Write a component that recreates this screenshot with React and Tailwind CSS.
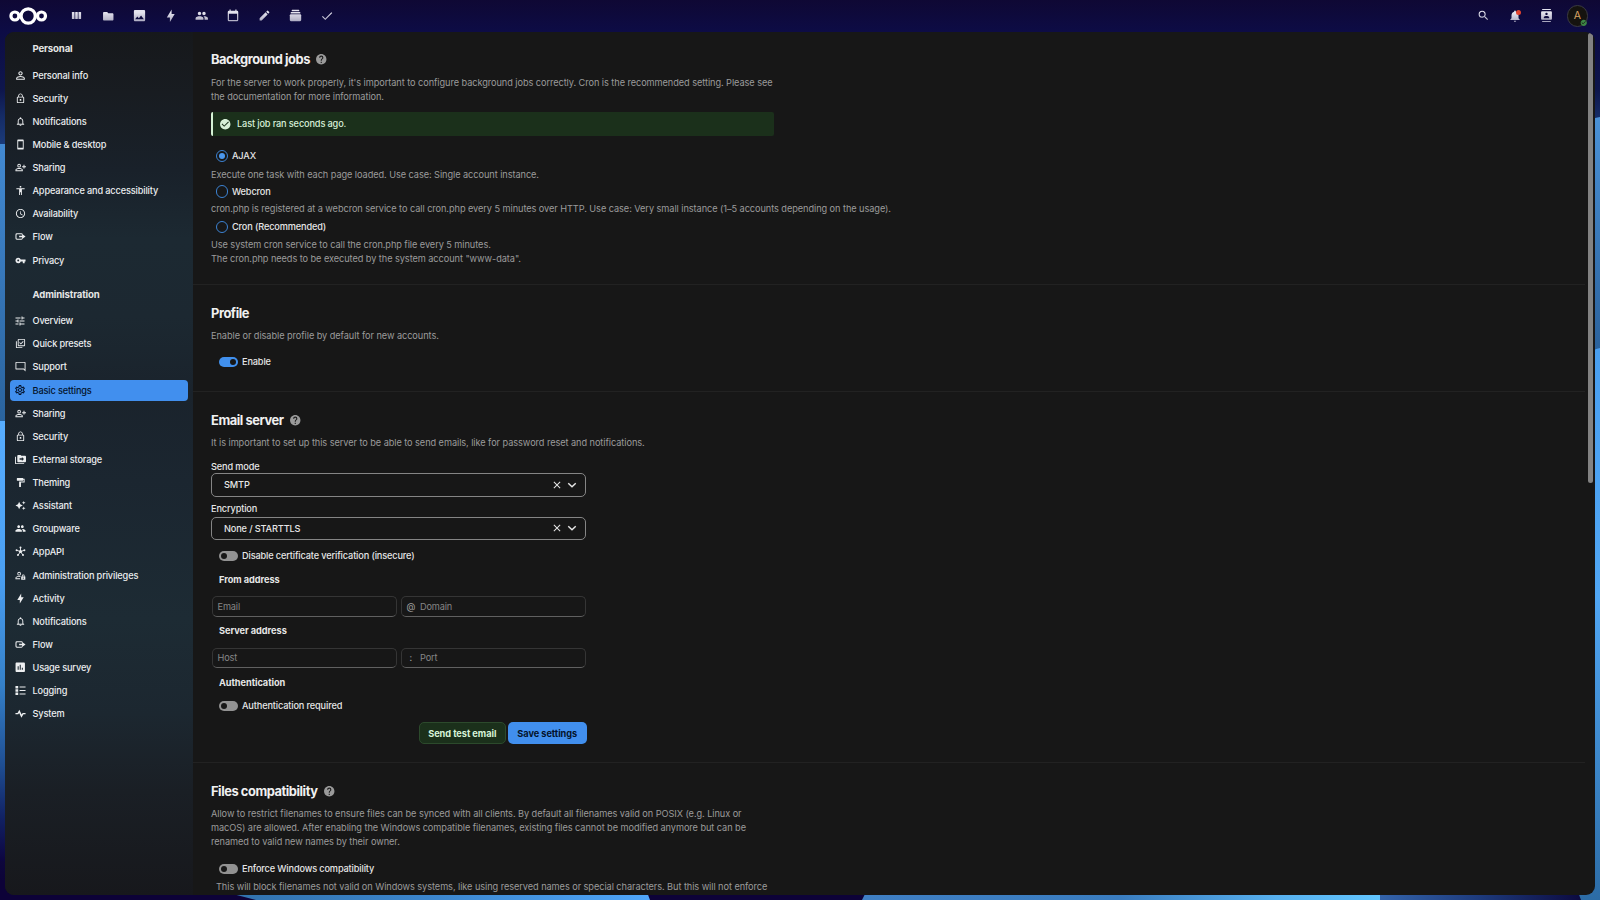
import React from 'react';
import {
  MdPersonOutline, MdLockOutline, MdNotificationsNone, MdSmartphone, MdAccessibility, MdAccessTime,
  MdVpnKey, MdTune, MdOutlineSettings, MdFormatPaint, MdPeople, MdAssessment, MdFolder, MdImage,
  MdEdit, MdCheck, MdSearch, MdNotifications, MdHelp, MdCheckCircle, MdClose, MdContacts,
} from 'react-icons/md';

const Svg = ({ children, className = 'size-[13px]' }) => (
  <svg viewBox="0 0 24 24" fill="currentColor" className={className}>{children}</svg>
);

const AccountPlus = (p) => (
  <Svg {...p}>
    <path d="M9 4a4 4 0 1 1 0 8 4 4 0 0 1 0-8m0 2.100A1.900 1.900 0 1 0 9 9.900 1.900 1.900 0 0 0 9 6.100M9 13c2.670 0 8 1.330 8 4v3H1v-3c0-2.670 5.330-4 8-4m0 2.100c-2.970 0-5.900 1.300-5.900 1.900v.9h11.800V17c0-.6-2.930-1.900-5.900-1.900z" />
    <path d="M18.500 6h2.200v3H24v2.200h-3.300v3h-2.200v-3h-3V9h3z" />
  </Svg>
);
const Flow = (p) => (
  <Svg {...p}>
    <path d="M4 5h10a3 3 0 0 1 3 2.500h-2.600a1 1 0 0 0-.9-.2H4.500a1.200 1.200 0 0 0-1.200 1.200v7a1.200 1.200 0 0 0 1.200 1.200h9a1 1 0 0 0 .9-.2H17a3 3 0 0 1-3 2.500H4a3 3 0 0 1-3-3V8a3 3 0 0 1 3-3z" />
    <path d="M9 10.600h6.500V6.500L23 12l-7.500 5.500v-4.100H9z" />
  </Svg>
);
const Presets = (p) => (
  <Svg {...p}>
    <path d="M20 16V4H8v12h12m2 0a2 2 0 0 1-2 2H8a2 2 0 0 1-2-2V4a2 2 0 0 1 2-2h12a2 2 0 0 1 2 2v12M12.800 14l-3.600-3.600 1.400-1.400 2.200 2.200 4.600-4.600L18.800 8l-6 6M16 20v2H4a2 2 0 0 1-2-2V7h2v13h12z" />
  </Svg>
);
const Message = (p) => (
  <Svg {...p}><path d="M22 2a1 1 0 0 1 1 1v20l-4.500-4.500H2a1 1 0 0 1-1-1V3a1 1 0 0 1 1-1h20M3 4v12.500h16.300L21 18V4H3z" /></Svg>
);
const FolderStack = (p) => (
  <Svg {...p}>
    <path d="M22 4h-8l-2-2H7a2 2 0 0 0-2 2v12a2 2 0 0 0 2 2h15a2 2 0 0 0 2-2V6a2 2 0 0 0-2-2M10 9h5V6.500l4.500 4.200L15 15v-2.500h-5V9M2 6H0v14a2 2 0 0 0 2 2h18v-2H2V6z" />
  </Svg>
);
const Sparkle = (p) => (
  <Svg {...p}>
    <path d="M9 4l2.500 5.500L17 12l-5.500 2.500L9 20l-2.500-5.500L1 12l5.500-2.500L9 4z" />
    <path d="M19 2l1.200 2.800L23 6l-2.800 1.200L19 10l-1.200-2.800L15 6l2.800-1.200zM19 14l1.200 2.800L23 18l-2.800 1.200L19 22l-1.200-2.800L15 18l2.800-1.200z" />
  </Svg>
);
const Hub = (p) => (
  <Svg {...p}>
    <g stroke="currentColor" strokeWidth="2"><path d="M12 12V4M12 12l8-2.500M12 12l5 7.500M12 12l-5 7.500M12 12L4 9.500" /></g>
    <circle cx="12" cy="12" r="3.400" /><circle cx="12" cy="3.500" r="2.200" /><circle cx="20.500" cy="9.500" r="2.200" /><circle cx="17.500" cy="19.500" r="2.200" /><circle cx="6.500" cy="19.500" r="2.200" /><circle cx="3.500" cy="9.500" r="2.200" />
  </Svg>
);
const AccountKey = (p) => (
  <Svg {...p}>
    <path d="M9 4a4 4 0 1 1 0 8 4 4 0 0 1 0-8m0 1.900A2.100 2.100 0 1 0 9 10.100 2.100 2.100 0 0 0 9 5.900M9 13c1 0 2.300.2 3.500.6l-1.300 1.600A10 10 0 0 0 9 14.900c-3 0-6.100 1.500-6.100 2.100v1.100H11V20H1v-3c0-2.700 5.300-4 8-4z" />
    <path d="M18 10a3 3 0 0 1 3 3v1.200h1.500v7h-9v-7H15V13a3 3 0 0 1 3-3m0 1.500a1.500 1.500 0 0 0-1.500 1.500v1.200h3V13a1.500 1.500 0 0 0-1.500-1.500m0 4.700a1.500 1.500 0 1 0 0 3 1.500 1.500 0 0 0 0-3z" />
  </Svg>
);
const Bolt = (p) => (
  <Svg {...p}><path d="M10.500 15H5L13.500 1v8H19l-8.500 14z" /></Svg>
);
const ListBox = (p) => (
  <Svg {...p}><path d="M1 2h6v5.500H1zM1 9.200h6v5.500H1zM1 16.500h6V22H1zM10 3.500h13v2.200H10zM10 10.900h13v2.200H10zM10 18.300h13v2.200H10z" /></Svg>
);
const Pulse = (p) => (
  <Svg {...p}><path d="M1 10.700h4.500L9.500 4l5 10.300 2.200-3.600H23v3h-4.600L14 21 9 11 7.200 13.700H1z" /></Svg>
);
const Bars = (p) => (
  <Svg {...p}><rect x="3.500" y="5.500" width="4.800" height="13" rx="1" /><rect x="9.600" y="5.500" width="4.800" height="13" rx="1" /><rect x="15.700" y="5.500" width="4.800" height="13" rx="1" /></Svg>
);
const Calendar = (p) => (
  <Svg {...p}><path d="M19 19H5V8h14m-3-7v2H8V1H6v2H5a2 2 0 0 0-2 2v14a2 2 0 0 0 2 2h14a2 2 0 0 0 2-2V5a2 2 0 0 0-2-2h-1V1h-2z" /></Svg>
);
const Deck = (p) => (
  <Svg {...p}><rect x="1.500" y="9.500" width="21" height="13" rx="2" /><rect x="3" y="5.500" width="18" height="2.700" rx="1" /><rect x="5" y="1.500" width="14" height="2.600" rx="1" /></Svg>
);

const personal = [
  ['Personal info', MdPersonOutline, 'size-[13px]'], ['Security', MdLockOutline], ['Notifications', MdNotificationsNone],
  ['Mobile & desktop', MdSmartphone], ['Sharing', AccountPlus], ['Appearance and accessibility', MdAccessibility],
  ['Availability', MdAccessTime], ['Flow', Flow], ['Privacy', MdVpnKey],
];
const admin = [
  ['Overview', MdTune, 'size-[12px]'], ['Quick presets', Presets], ['Support', Message], ['Basic settings', MdOutlineSettings, 'size-[12px]'],
  ['Sharing', AccountPlus], ['Security', MdLockOutline], ['External storage', FolderStack], ['Theming', MdFormatPaint],
  ['Assistant', Sparkle], ['Groupware', MdPeople], ['AppAPI', Hub], ['Administration privileges', AccountKey],
  ['Activity', Bolt], ['Notifications', MdNotificationsNone], ['Flow', Flow], ['Usage survey', MdAssessment, 'size-[12.500px]'],
  ['Logging', ListBox], ['System', Pulse],
];

function Nav({ items, active }) {
  return (
    <ul>
      {items.map(([label, Icon, size = 'size-[11px]']) => (
        <li key={label} className="flex h-[23.130px] items-center">
          <a className={
            'flex h-[21px] w-[177.500px] items-center gap-[6px] rounded-[4px] pl-[3.500px] ' +
            (label === active ? 'bg-[#418fee] text-[#04132b]' : 'text-[#eceef0]')
          }>
            <span className="flex w-[13px] shrink-0 justify-center"><Icon className={size} /></span>
            <span className="pt-[0.800px]">{label}</span>
          </a>
        </li>
      ))}
    </ul>
  );
}

function Wallpaper() {
  const stops = {
    base: [[0, '#0f0834'], [0.035, '#0d0c45'], [0.1, '#0e164c'], [0.13, '#152c66'], [0.16, '#1b3a78'], [0.9, '#0f1047'], [1, '#0c0034']],
    left1: [[0, '#4289d2'], [1, '#2a639d']],
    left2: [[0, '#57adff'], [0.35, '#4a9ff2'], [0.6, '#3580c8'], [0.78, '#1f4f93'], [0.9, '#112264'], [1, '#0d0540']],
    right1: [[0, '#4a91d6'], [1, '#2b629c']],
    right2: [[0, '#499ff0'], [0.45, '#50a6f4'], [1, '#2c6ca6']],
    bot1: [[0, '#3171ab'], [0.5, '#3c86ce'], [1, '#4fa5f8']],
    bot2: [[0, '#3f7fc4'], [0.5, '#3a7dc0'], [0.8, '#57b0ee'], [1, '#62c6ff']],
    bot3: [[0, '#3464ab'], [0.5, '#1d3a7c'], [1, '#0c0a40']],
  };
  return (
    <svg viewBox="0 0 1600 900" className="absolute inset-0 h-[900px] w-[1600px]">
      <defs>
        {Object.entries(stops).map(([id, list]) => (
          <linearGradient key={id} id={id} x1="0" y1="0" x2={id.startsWith('bot') ? 1 : 0} y2={id.startsWith('bot') ? 0 : 1}>
            {list.map(([o, c]) => <stop key={o} offset={o} stopColor={c} />)}
          </linearGradient>
        ))}
      </defs>
      <rect width="1600" height="900" fill="url(#base)" />
      <rect y="144" width="20" height="277" fill="url(#left1)" />
      <rect y="421" width="20" height="440" fill="url(#left2)" />
      <rect x="0" y="880" width="1580" height="20" fill="#0d0238" />
      <path d="M1580 121l20-4v232h-20z" fill="url(#right1)" />
      <path d="M1570 356l30-8v552h-30z" fill="url(#right2)" />
      <path d="M225 892h422l3 8H256z" fill="url(#bot1)" />
      <path d="M866 892h514v8H862z" fill="url(#bot2)" />
      <path d="M1380 892h198l3 8h-201z" fill="url(#bot3)" />
    </svg>
  );
}

const Heading = ({ children, help = true }) => (
  <h2 className="flex h-[20px] items-center gap-[5.500px] text-[12.900px] font-bold tracking-[-0.450px] text-[#f0f0f0]">
    <span className="pt-[0.800px]">{children}</span>
    {help && <MdHelp className="-ml-[0.500px] size-[12.500px] text-[#9a9a9a]" />}
  </h2>
);
const Desc = ({ children, className = '' }) => (
  <p className={'leading-[14.100px] text-[#9b9b9b] ' + className}><span className="relative top-[0.600px] font-normal tracking-[-0.063px]">{children}</span></p>
);
const Radio = ({ label, checked, className = '' }) => (
  <label className={'flex h-[16px] items-center gap-[4px] pl-[4.500px] ' + className}>
    <span className="flex size-[12.500px] items-center justify-center rounded-full border-[1.500px] border-[#3c82d2]">
      {checked && <span className="size-[6.500px] rounded-full bg-[#4b98ef]" />}
    </span>
    <span className="pt-[0.500px]">{label}</span>
  </label>
);
const Toggle = ({ label, on, className = '' }) => (
  <label className={'flex h-[16px] items-center gap-[4.500px] pl-[8px] ' + className}>
    <span className={'flex h-[10px] w-[18.500px] items-center rounded-full px-[1.800px] ' + (on ? 'justify-end bg-[#4190ee]' : 'bg-[#929292]')}>
      <span className="size-[6px] rounded-full bg-[#171717]" />
    </span>
    {label}
  </label>
);
const Select = ({ value, className = '' }) => (
  <div className={'-ml-[0.500px] flex h-[23.500px] w-[375.500px] items-center rounded-[5px] border border-[#858585] pl-[12.500px] pr-[8.500px] ' + className}>
    <span className="flex-1 pt-[0.500px]">{value}</span>
    <MdClose className="mr-[4px] size-[12px]" />
    <svg viewBox="0 0 12 12" className="size-[10px]" fill="none" stroke="currentColor" strokeWidth="1.700"><path d="M1.500 3.800L6 8.200l4.500-4.400" /></svg>
  </div>
);
const Fields = ({ left, mark, right, className = '' }) => (
  <div className={'flex h-[20.500px] gap-[4px] pl-[1px] font-normal text-[#868686] ' + className}>
    <div className="flex w-[184.500px] items-center rounded-[5px] border border-[#353535] border-b-[#606060] pl-[4.500px]">{left}</div>
    <div className="flex w-[185px] items-center rounded-[5px] border border-[#353535] border-b-[#606060] pl-[4.500px]">
      <span className="w-[9.500px] text-center text-[#a0a0a0]">{mark}</span>
      <span className="ml-[4.500px]">{right}</span>
    </div>
  </div>
);
const Sub = ({ children, className = '' }) => (
  <h3 className={'h-[14px] pl-[8px] font-bold leading-[15px] tracking-[-0.040px] ' + className}>{children}</h3>
);

const apps = [
  [Bars, 'size-[13px]'], [MdFolder, 'size-[12.500px]'], [MdImage, 'size-[15px]'], [Bolt, 'size-[13.500px]'], [MdPeople, 'size-[13.500px]'],
  [Calendar, 'size-[14px]'], [MdEdit, 'size-[13px]'], [Deck, 'size-[13px]'], [MdCheck, 'size-[14px]'],
];
const slot = 'flex w-[31.250px] items-center justify-center [mask-image:linear-gradient(180deg,#000_30%,rgba(0,0,0,0.700)_100%)]';

export default function App() {
  return (
    <div className="relative h-[900px] w-[1600px] overflow-hidden whitespace-nowrap font-['Inter','Liberation_Sans',sans-serif] text-[9.200px] font-medium tracking-[-0.140px] text-[#e6e6e6]">
      <Wallpaper />
      <div className="relative flex h-full flex-col">
        <header className="flex h-[31.500px] shrink-0 items-center pl-[8px] pr-[12px] text-[#e4e3ee]">
          <svg viewBox="0 0 40 20" className="h-[20px] w-[40px]" fill="none" stroke="#fff" strokeWidth="3.200">
            <circle cx="20.200" cy="10" r="7.100" /><circle cx="6.900" cy="10" r="4" /><circle cx="33.500" cy="10" r="4" />
          </svg>
          <nav className="ml-[13.200px] flex">
            {apps.map(([Icon, size], i) => (
              <span key={i} className={slot}><Icon className={size} /></span>
            ))}
          </nav>
          <div className="ml-auto flex items-center">
            <span className={slot}><MdSearch className="size-[13px]" /></span>
            <span className="relative flex">
              <span className={slot}><MdNotifications className="size-[14px]" /></span>
              <span className="absolute left-[16.500px] top-[1.500px] size-[4.500px] rounded-full bg-[#e2432f]" />
            </span>
            <span className={slot}><MdContacts className="size-[13px]" /></span>
            <span className="relative ml-[4.500px] flex size-[21.500px] items-center justify-center rounded-full border border-[#3b3b42] bg-[#15130f] text-[10.500px] font-normal text-[#d9a566]">
              A
              <MdCheckCircle className="absolute bottom-[-0.500px] right-0 size-[7.500px] text-[#3c8745]" />
            </span>
          </div>
        </header>
        <div className="mx-[5px] mb-[5px] flex min-h-0 flex-1 overflow-hidden rounded-[9px] bg-[#171717]">
          <aside className="w-[187.500px] shrink-0 bg-[linear-gradient(180deg,#16181b_0%,#181c21_7%,#19212a_16%,#1c2932_24%,#1c2831_33%,#1a232c_42%,#1b2630_52%,#1d2b34_68%,#1c2730_79%,#1a1f25_88%,#17181c_100%)] pl-[5px]">
            <h2 className="mt-[7px] h-[20px] pl-[22.500px] text-[9.600px] font-bold leading-[20.500px]">Personal</h2>
            <div className="mt-[5px]"><Nav items={personal} /></div>
            <h2 className="mt-[12.500px] h-[20px] pl-[22.500px] text-[9.600px] font-bold leading-[21px]">Administration</h2>
            <div className="mt-[5px]"><Nav items={admin} active="Basic settings" /></div>
          </aside>
          <main className="min-w-0 flex-1 overflow-hidden">
            <section className="mr-[3px] h-[253.500px] border-b border-[#222222] pl-[18.500px] pt-[18px]">
              <Heading>Background jobs</Heading>
              <Desc className="mt-[5.500px]">For the server to work properly, it's important to configure background jobs correctly. Cron is the recommended setting. Please see<br />the documentation for more information.</Desc>
              <div className="mt-[8.800px] flex h-[24px] w-[562.500px] items-center gap-[6px] rounded-[2px] border-l-[2.500px] border-[#d5f2d5] bg-[#1b301b] pl-[5.500px] text-[#d8efd8]">
                <MdCheckCircle className="size-[12.500px]" />
                <span className="pt-[0.500px]">Last job ran seconds ago.</span>
              </div>
              <Radio className="mt-[12px]" label="AJAX" checked />
              <Desc className="mt-[3px]">Execute one task with each page loaded. Use case: Single account instance.</Desc>
              <Radio className="mt-[2.500px]" label="Webcron" />
              <Desc className="mt-[2.300px]">cron.php is registered at a webcron service to call cron.php every 5 minutes over HTTP. Use case: Very small instance (1–5 accounts depending on the usage).</Desc>
              <Radio className="mt-[3px]" label="Cron (Recommended)" />
              <Desc className="mt-[2.600px]">Use system cron service to call the cron.php file every 5 minutes.<br />The cron.php needs to be executed by the system account "www-data".</Desc>
            </section>
            <section className="mr-[3px] h-[107px] border-b border-[#222222] pl-[18.500px] pt-[18px]">
              <Heading help={false}>Profile</Heading>
              <Desc className="mt-[5px]">Enable or disable profile by default for new accounts.</Desc>
              <Toggle className="mt-[12px]" label="Enable" on />
            </section>
            <section className="mr-[3px] h-[370.500px] border-b border-[#222222] pl-[18.500px] pt-[18px]">
              <Heading>Email server</Heading>
              <Desc className="mt-[5px]">It is important to set up this server to be able to send emails, like for password reset and notifications.</Desc>
              <div className="mt-[10px] h-[14px] leading-[15px]">Send mode</div>
              <Select className="mt-[0.300px]" value="SMTP" />
              <div className="mt-[5px] h-[14px] leading-[14px]">Encryption</div>
              <Select className="mt-[0.800px]" value="None / STARTTLS" />
              <Toggle className="mt-[7.500px]" label="Disable certificate verification (insecure)" />
              <Sub className="mt-[8.500px]">From address</Sub>
              <Fields className="mt-[10px]" left="Email" mark="@" right="Domain" />
              <Sub className="mt-[6.500px]">Server address</Sub>
              <Fields className="mt-[10.500px]" left="Host" mark=":" right="Port" />
              <Sub className="mt-[7px]">Authentication</Sub>
              <Toggle className="mt-[9px]" label="Authentication required" />
              <div className="mt-[8.300px] flex h-[22px] w-[375.500px] justify-end gap-[2px] font-bold tracking-[-0.040px]">
                <button className="w-[87.500px] rounded-[5px] border border-[#2c4a2c] bg-[#1b301b] text-[#d8f3d8]">Send test email</button>
                <button className="w-[78.500px] rounded-[5px] bg-[#418fee] text-[#04132b]">Save settings</button>
              </div>
            </section>
            <section className="mr-[3px] pl-[18.500px] pt-[18.500px]">
              <Heading>Files compatibility</Heading>
              <Desc className="mt-[5.500px]">Allow to restrict filenames to ensure files can be synced with all clients. By default all filenames valid on POSIX (e.g. Linux or<br />macOS) are allowed. After enabling the Windows compatible filenames, existing files cannot be modified anymore but can be<br />renamed to valid new names by their owner.</Desc>
              <Toggle className="mt-[12.200px]" label="Enforce Windows compatibility" />
              <Desc className="mt-[2.500px] pl-[5px]">This will block filenames not valid on Windows systems, like using reserved names or special characters. But this will not enforce</Desc>
            </section>
          </main>
          <div className="w-[7px] shrink-0 pt-[1.500px]">
            <div className="h-[450px] w-[5px] rounded-full bg-[#828282]" />
          </div>
        </div>
      </div>
    </div>
  );
}
